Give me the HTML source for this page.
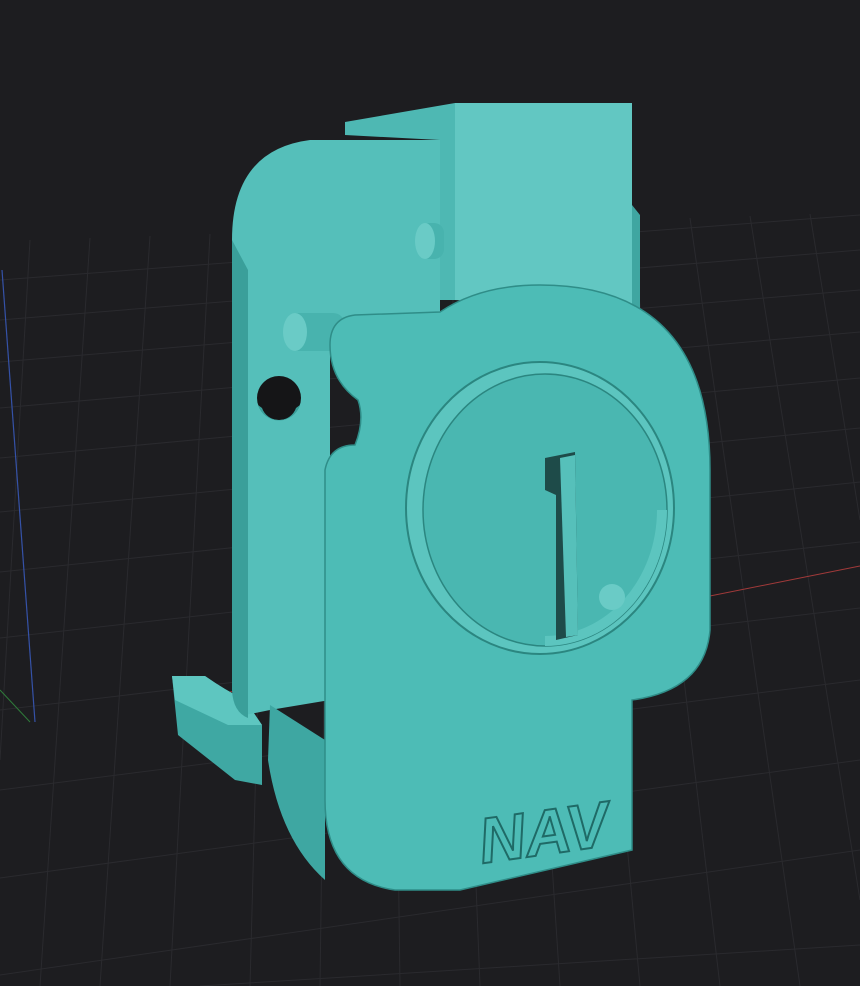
<!DOCTYPE html>
<html><head><meta charset="utf-8"><style>
html,body{margin:0;padding:0;background:#1c1c1f;}
svg{display:block}
</style></head><body>
<svg width="860" height="986" viewBox="0 0 860 986" xmlns="http://www.w3.org/2000/svg">
<rect width="860" height="986" fill="#1d1d20"/>
<g stroke="#2a2a2e" stroke-width="1" fill="none">
<path d="M0 280 L860 215 M0 320 L860 250 M0 362 L860 290 M0 408 L860 332 M0 458 L860 378 M0 512 L860 428 M0 572 L860 482 M0 638 L860 542 M0 710 L860 608 M0 790 L860 680 M0 878 L860 760 M0 975 L860 850 M200 986 L860 945"/>
<path d="M30 240 L0 760 M90 238 L40 986 M150 236 L100 986 M210 234 L170 986 M270 232 L250 986 M330 230 L320 986 M390 228 L400 986 M450 226 L480 986 M510 224 L560 986 M570 222 L640 986 M630 220 L720 986 M690 218 L800 986 M750 216 L860 900 M810 214 L860 520"/>
</g>
<line x1="230" y1="692" x2="860" y2="566" stroke="#a23a3a" stroke-width="1"/>
<line x1="2" y1="270" x2="35" y2="722" stroke="#3552a8" stroke-width="1.2"/>
<line x1="0" y1="690" x2="30" y2="722" stroke="#2f7a3a" stroke-width="1"/>

<path d="M172 676 L205 676 Q225 690 245 700 L262 725 L262 785 L235 780 L178 735 Z" fill="#3fa8a3"/>
<path d="M172 676 L205 676 Q225 690 245 700 L262 725 L228 725 L175 700 Z" fill="#5ec6c0"/>

<path d="M455 103 L632 103 L632 310 L455 300 Z" fill="#62c7c2"/>
<path d="M345 122 L455 103 L455 300 L440 300 L440 140 L345 135 Z" fill="#4eb8b3"/>
<path d="M632 205 L640 215 L640 330 L632 320 Z" fill="#3fa6a1"/>

<path d="M310 140 L440 140 L440 330 L330 330 L330 700 L270 710 L245 715 Q235 710 235 690 L232 240 Q232 150 310 140 Z" fill="#55bfba"/>
<path d="M232 240 L232 690 Q233 712 248 718 L248 270 Z" fill="#3a9f9a"/>
<rect x="420" y="223" width="24" height="36" rx="10" fill="#48b3ae"/>
<ellipse cx="425" cy="241" rx="10" ry="18" fill="#6acbc6"/>
<rect x="285" y="313" width="60" height="38" rx="12" fill="#48b3ae"/>
<ellipse cx="295" cy="332" rx="12" ry="19" fill="#6acbc6"/>
<circle cx="279" cy="398" r="22" fill="#151517"/>
<path d="M258 405 A22 22 0 0 0 300 405 L296 408 A18 18 0 0 1 262 408 Z" fill="#3a9f9a"/>

<path d="M270 705 L325 740 L325 880 Q280 840 268 760 Z" fill="#3ea7a2"/>

<path d="M355 315 L440 312 Q480 285 540 285 Q710 285 710 470 L710 630 Q705 690 632 700 L632 850 L460 890 L395 890 Q325 880 325 800 L325 470 Q330 445 355 445 Q365 420 358 400 Q330 380 330 345 Q330 318 355 315 Z" fill="#4dbcb6" stroke="#2f8d88" stroke-width="1.5"/>
<ellipse cx="540" cy="508" rx="134" ry="146" fill="#5cc5bf" stroke="#2b8680" stroke-width="2"/>
<ellipse cx="545" cy="510" rx="122" ry="136" fill="#4ab7b1" stroke="#2b8680" stroke-width="1.5"/>
<path d="M667 510 A122 136 0 0 1 545 646 L545 636 A112 126 0 0 0 657 510 Z" fill="#5cc5bf"/>
<path d="M545 458 L575 452 L578 635 L556 640 L556 495 L545 490 Z" fill="#1e4b49"/>
<path d="M560 458 L575 455 L578 635 L566 637 Z" fill="#56c0ba"/>
<circle cx="612" cy="597" r="13" fill="#6acbc6"/>

<text x="478" y="855" font-family="Liberation Sans, sans-serif" font-size="64" font-weight="bold" font-style="italic" fill="#4dbcb6" stroke="#1f6a66" stroke-width="2" transform="rotate(-8 540 830)">NAV</text>
</svg>
</body></html>
